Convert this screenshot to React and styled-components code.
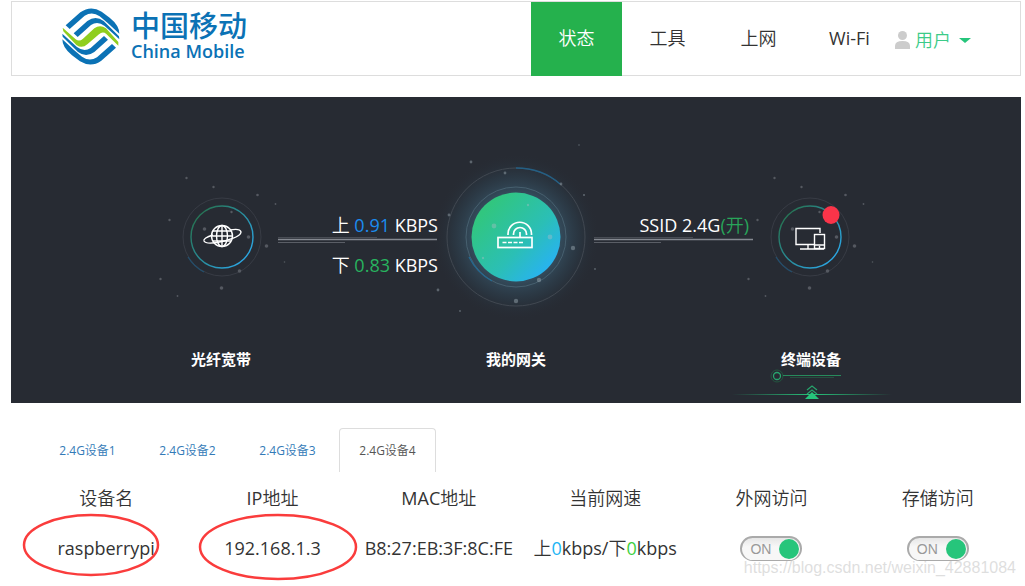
import React, { useState } from "react";
import styled, { createGlobalStyle, css } from "styled-components";

const GlobalStyle = createGlobalStyle`
  * {
    box-sizing: border-box;
  }
  body {
    margin: 0;
    background: #fff;
    color: #333;
    font-family: "Open Sans", "Noto Sans CJK SC DemiLight", "Noto Sans CJK SC Light", "Noto Sans CJK SC", sans-serif;
    font-size: 18px;
    line-height: 24px;
  }
`;

const Page = styled.div`
  position: relative;
  padding: 1px 4px 8px 11px;
`;

const Header = styled.header`
  display: flex;
  justify-content: space-between;
  height: 75px;
  padding: 0 49px 0 50px;
  border: 1px solid #ddd;
`;

const Brand = styled.a`
  display: flex;
  align-items: flex-start;
  gap: 11px;
  padding-top: 6px;
  color: #0b72b5;
  text-decoration: none;
`;

const BrandName = styled.span`
  display: flex;
  flex-direction: column;
  font-size: 18px;
  font-weight: 600;
  line-height: 22px;
`;

const BrandChinese = styled.span`
  font-family: "Noto Sans CJK SC", sans-serif;
  font-size: 29px;
  font-weight: 500;
  line-height: 32px;
`;

const Nav = styled.nav`
  display: flex;
`;

const NavItem = styled.a`
  display: flex;
  justify-content: center;
  width: 91px;
  height: 74px;
  padding-top: 24px;
  color: #333;
  text-decoration: none;
  ${(props) =>
    props.$active &&
    css`
      background: #25b14d;
      color: #fff;
    `}
`;

const UserButton = styled.button`
  display: flex;
  align-items: center;
  gap: 5px;
  height: 76px;
  padding: 0;
  border: 0;
  background: none;
  color: #3ccb88;
  font: inherit;
`;

const Caret = styled.span`
  margin-left: 3px;
  border: 6px solid transparent;
  border-top: 5px solid #26c57b;
  border-bottom: 0;
`;

const Hero = styled.section`
  display: grid;
  grid-template-columns: 114px 160px 156px 160px 114px;
  justify-content: center;
  margin-top: 21px;
  padding-top: 62px;
  background: #272b33;
  color: #fff;
`;

const Station = styled.div`
  display: flex;
  flex-direction: column;
  align-items: center;
`;

const Art = styled.svg`
  flex: none;
  width: 156px;
  height: 156px;
  overflow: visible;
`;

const StationName = styled.h2`
  margin: 34px 0 0;
  font-family: "Noto Sans CJK SC", sans-serif;
  font-size: 15px;
  font-weight: 700;
  line-height: 20px;
`;

const Marker = styled.svg`
  flex: none;
  width: 164px;
  height: 34px;
`;

const Link = styled.div`
  display: flex;
  flex-direction: column;
  padding-top: 54px;
  text-align: right;
`;

const Rate = styled.p`
  margin: 0;
  padding-right: ${(props) => (props.$inset ? "5px" : "0")};
  white-space: nowrap;
  line-height: 24px;
  &:last-child {
    padding-top: 8px;
  }
`;

const Tint = styled.span`
  color: ${(props) => props.$color};
`;

const Tabs = styled.div`
  display: flex;
  gap: 3px;
  margin-top: 25px;
  padding-left: 28px;
`;

const Tab = styled.button`
  width: 97px;
  height: 44px;
  padding: 0 0 2px;
  border: 1px solid ${(props) => (props.$active ? "#ddd" : "transparent")};
  border-bottom: 0;
  border-radius: 4px 4px 0 0;
  background: #fff;
  color: ${(props) => (props.$active ? "#555" : "#337ab7")};
  font-family: inherit;
  font-size: 12px;
`;

const Devices = styled.table`
  width: calc(100% - 12px);
  margin-left: 12px;
  border-collapse: collapse;
  table-layout: fixed;
`;

const HeadCell = styled.th`
  height: 52px;
  padding: 0;
  font-weight: 400;
`;

const Cell = styled.td`
  position: relative;
  height: 50px;
  padding: 0 0 2px;
  text-align: center;
  white-space: nowrap;
`;

const Ring = styled.svg`
  position: absolute;
  top: -12px;
  left: 0;
  width: 172px;
  height: 70px;
  overflow: visible;
  pointer-events: none;
`;

const Switch = styled.label`
  position: relative;
  display: inline-flex;
  align-items: center;
  width: 62px;
  height: 25px;
  padding-left: 8px;
  border: 2px solid #aaa;
  border-bottom-width: 1px;
  border-radius: 13px;
  background: linear-gradient(#e6e6e6, #f7f7f7 40%);
  color: #999;
  font-family: "Liberation Sans", Arial, sans-serif;
  font-size: 14px;
  line-height: 20px;
  vertical-align: middle;
`;

const SwitchInput = styled.input`
  appearance: none;
  position: absolute;
  top: 1px;
  right: 1px;
  width: 20px;
  height: 20px;
  margin: 0;
  border-radius: 50%;
  background: #26c57b;
`;

const Watermark = styled.span`
  position: absolute;
  right: 9px;
  bottom: 2px;
  color: rgba(190, 190, 190, 0.5);
  font-family: "Liberation Sans", Arial, sans-serif;
  font-size: 16px;
  pointer-events: none;
`;

const Logo = () => (
  <svg width="58" height="57" viewBox="35 22 174 171" aria-hidden="true">
    <g fill="#0b72b5">
      <path d="M46 74 L90 35 Q121 13 154 33 L178 51 Q207 74 207 99 L172 67 L148 47 Q126 31 103 45 L58 85 Z" />
      <path d="M70 98 L111 61 Q136 43 160 61 L206 107 L207 116 L163 76 Q142 60 122 73 L82 109 Z" />
      <g transform="rotate(180 121.500 107.500)">
        <path d="M46 74 L90 35 Q121 13 154 33 L178 51 Q207 74 207 99 L172 67 L148 47 Q126 31 103 45 L58 85 Z" />
        <path d="M70 98 L111 61 Q136 43 160 61 L206 107 L207 116 L163 76 Q142 60 122 73 L82 109 Z" />
      </g>
    </g>
    <path
      fill="#8fce1e"
      d="M37 81 L76 116 Q87 124 98 114 L132 83 Q149 70 167 83 L204 124 L204 135 L168 100 Q157 91 146 101 L111 131 Q95 145 78 133 L39 92 Z"
    />
  </svg>
);

const smallDots = [
  [36, 18, 1.2],
  [63, 27, 1.2],
  [107, 35, 1.3],
  [125, 44, 0.9],
  [19, 60, 1.2],
  [54, 69, 1.8],
  [81, 52, 1.2],
  [98, 77, 1.8],
  [116, 86, 1.8],
  [134, 102, 0.8],
  [89, 111, 1.8],
  [71, 128, 1.8],
  [10, 119, 1.2],
  [27, 136, 0.9],
];

const SmallOrbit = ({ id, viewBox, alert, children }) => (
  <Art viewBox={viewBox} fill="none" aria-hidden="true">
    <defs>
      <linearGradient id={id} x1="0.1" y1="0.1" x2="0.9" y2="0.8">
        <stop offset="0" stopColor="#26724f" />
        <stop offset="1" stopColor="#2ba5df" />
      </linearGradient>
    </defs>
    <circle cx="79" cy="78" r="39" stroke="#383c45" />
    <path d="M45 98 Q51 108 61 113" stroke="#23506f" strokeWidth="1.200" />
    <circle cx="79" cy="78" r="31" stroke={`url(#${id})`} strokeWidth="1.400" />
    {smallDots.map(([x, y, r]) => (
      <circle key={`${x}-${y}`} cx={x + 7.5} cy={y + 1} r={r} fill="#555961" />
    ))}
    {children}
    {alert && <ellipse cx="100" cy="56" rx="8.500" ry="9" fill="#fa3449" />}
  </Art>
);

const Planet = () => (
  <g stroke="#fff" strokeWidth="1.400">
    <circle cx="79" cy="77" r="10.500" />
    <ellipse cx="79" cy="77" rx="5.500" ry="10.500" />
    <path d="M79 66.500V87.500M70 72h18M68.500 77h21M70 82h18" />
    <path d="M70 76 Q60 79 61 82 Q63 86 79 82.500 Q98 78 98 73 Q97 69 87 71" />
  </g>
);

const Screens = () => (
  <g stroke="#fff" strokeWidth="1.400">
    <path d="M89 74V69.500H65V85.500H83M77 86v3.500M69 90h24" />
    <rect x="83.500" y="75.500" width="10" height="14" />
    <path d="M84 86h9M88.500 87v2" />
  </g>
);

const bigDots = [
  [33, 3, 1.4],
  [67, 14, 1.4],
  [123, 25, 1.4],
  [146, 36, 1.1],
  [11, 56, 1.4],
  [56, 67, 2.4],
  [90, 46, 1.2],
  [112, 78, 2.4],
  [135, 89, 2.2],
  [45, 99, 1.2],
  [101, 121, 2.2],
  [78, 142, 2.2],
  [0, 131, 1.4],
  [22, 152, 0.9],
  [141, -14, 0.8],
  [157, 110, 0.9],
];

const Gateway = () => (
  <Art viewBox="0 0 156 156" fill="none" aria-hidden="true">
    <defs>
      <radialGradient id="halo">
        <stop offset="0.500" stopColor="#4a7f9c" stopOpacity="0.420" />
        <stop offset="0.750" stopColor="#37647d" stopOpacity="0.180" />
        <stop offset="1" stopColor="#272b33" stopOpacity="0" />
      </radialGradient>
      <linearGradient id="disc" x1="0.150" y1="0.200" x2="0.850" y2="0.850">
        <stop offset="0" stopColor="#31c67f" />
        <stop offset="0.600" stopColor="#2bbfb5" />
        <stop offset="1" stopColor="#28b3ee" />
      </linearGradient>
    </defs>
    <circle cx="78" cy="78" r="84" fill="url(#halo)" />
    <circle cx="78" cy="78" r="69" stroke="#414851" />
    <path d="M78 9 Q104 9 122 25" stroke="#245f84" strokeWidth="1.300" />
    <circle cx="78" cy="78" r="50" stroke="#47606f" />
    <path d="M31 98 Q39 114 54 122" stroke="#256a91" strokeWidth="1.300" />
    <circle cx="78" cy="78" r="44.500" fill="url(#disc)" />
    {bigDots.map(([x, y, r]) => (
      <circle key={`${x}-${y}`} cx={x} cy={y} r={r} fill="#aebdc5" opacity="0.400" />
    ))}
    <g stroke="#fff" strokeWidth="1.700">
      <rect x="60" y="78.500" width="34" height="10" />
      <path d="M64.500 83.500h21" strokeDasharray="4 1.500" />
      <path d="M82 78V73M70 76V75a11.500 11.500 0 0 1 23.500 0v1M75.500 76v-1a6.500 6.500 0 0 1 13 0v1" />
    </g>
  </Art>
);

const Rule = () => (
  <svg width="160" height="8" viewBox="0 0 160 8" aria-hidden="true">
    <path d="M0 0.500H99" stroke="#484c54" />
    <path d="M0 2.500H159" stroke="#858991" strokeWidth="1.400" />
    <path d="M0 5.500H67" stroke="#5a5e66" />
  </svg>
);

const ActiveMarker = () => (
  <Marker viewBox="1 0 164 34" fill="none" aria-hidden="true">
    <defs>
      <linearGradient id="fade">
        <stop offset="0" stopColor="#26c57b" stopOpacity="0" />
        <stop offset="0.500" stopColor="#26c57b" />
        <stop offset="1" stopColor="#26c57b" stopOpacity="0" />
      </linearGradient>
    </defs>
    <circle cx="49" cy="7" r="6" stroke="#23553f" />
    <circle cx="49" cy="7" r="3.500" stroke="#27a56c" strokeWidth="1.300" />
    <path d="M55 6.500H113" stroke="#278b5c" />
    <path d="M62 8.500H106" stroke="#26503f" />
    <rect x="4" y="25" width="160" height="1" fill="url(#fade)" />
    <path d="M79 21l5-4 5 4M79 25l5-4 5 4" stroke="#27a56c" strokeWidth="1.200" />
    <path d="M77 30l7-7 7 7z" fill="#26c57b" />
  </Marker>
);

const tabNames = ["2.4G设备1", "2.4G设备2", "2.4G设备3", "2.4G设备4"];
const columns = ["设备名", "IP地址", "MAC地址", "当前网速", "外网访问", "存储访问"];

const App = () => {
  const [tab, setTab] = useState("2.4G设备4");
  const [page, setPage] = useState("状态");

  return (
    <>
      <GlobalStyle />
      <Page>
        <Header>
          <Brand href="#home">
            <Logo />
            <BrandName>
              <BrandChinese>中国移动</BrandChinese>
              China Mobile
            </BrandName>
          </Brand>
          <Nav>
            {["状态", "工具", "上网", "Wi-Fi"].map((item) => (
              <NavItem
                key={item}
                href={`#${item}`}
                $active={item === page}
                onClick={() => setPage(item)}
              >
                {item}
              </NavItem>
            ))}
            <UserButton type="button">
              <svg width="15" height="18" viewBox="0 0 15 18" fill="#ccc" aria-hidden="true">
                <ellipse cx="7.500" cy="4.500" rx="4.500" ry="4.500" />
                <path d="M0 18v-3q0-5 7.500-5t7.500 5v3z" />
              </svg>
              用户
              <Caret />
            </UserButton>
          </Nav>
        </Header>

        <Hero>
          <Station>
            <SmallOrbit id="fiber" viewBox="0 0 156 156">
              <Planet />
            </SmallOrbit>
            <StationName>光纤宽带</StationName>
          </Station>
          <Link>
            <Rate>
              上 <Tint $color="#1b8cf0">0.91</Tint> KBPS
            </Rate>
            <Rule />
            <Rate>
              下 <Tint $color="#28b35f">0.83</Tint> KBPS
            </Rate>
          </Link>
          <Station>
            <Gateway />
            <StationName>我的网关</StationName>
          </Station>
          <Link>
            <Rate $inset>
              SSID 2.4G<Tint $color="#28a55a">(开)</Tint>
            </Rate>
            <Rule />
          </Link>
          <Station>
            <SmallOrbit id="terminal" viewBox="2 0 156 156" alert>
              <Screens />
            </SmallOrbit>
            <StationName>终端设备</StationName>
            <ActiveMarker />
          </Station>
        </Hero>

        <Tabs role="tablist">
          {tabNames.map((name) => (
            <Tab
              key={name}
              type="button"
              role="tab"
              aria-selected={name === tab}
              $active={name === tab}
              onClick={() => setTab(name)}
            >
              {name}
            </Tab>
          ))}
        </Tabs>

        <Devices>
          <thead>
            <tr>
              {columns.map((column) => (
                <HeadCell key={column} scope="col">
                  {column}
                </HeadCell>
              ))}
            </tr>
          </thead>
          <tbody>
            <tr>
              <Cell>
                raspberrypi
                <Ring viewBox="0 0 172 70" fill="none" aria-hidden="true">
                  <ellipse cx="68" cy="33" rx="67" ry="30" stroke="#fa3c3c" strokeWidth="2.500" />
                </Ring>
              </Cell>
              <Cell>
                192.168.1.3
                <Ring viewBox="0 0 172 70" fill="none" aria-hidden="true">
                  <ellipse cx="89" cy="35" rx="78" ry="32" stroke="#fa3c3c" strokeWidth="2.500" />
                </Ring>
              </Cell>
              <Cell>B8:27:EB:3F:8C:FE</Cell>
              <Cell>
                上<Tint $color="#1cb5f5">0</Tint>kbps/下<Tint $color="#3fd03f">0</Tint>kbps
              </Cell>
              <Cell>
                <Switch>
                  ON
                  <SwitchInput type="checkbox" role="switch" defaultChecked />
                </Switch>
              </Cell>
              <Cell>
                <Switch>
                  ON
                  <SwitchInput type="checkbox" role="switch" defaultChecked />
                </Switch>
              </Cell>
            </tr>
          </tbody>
        </Devices>
        <Watermark>https://blog.csdn.net/weixin_42881084</Watermark>
      </Page>
    </>
  );
};

export default App;
